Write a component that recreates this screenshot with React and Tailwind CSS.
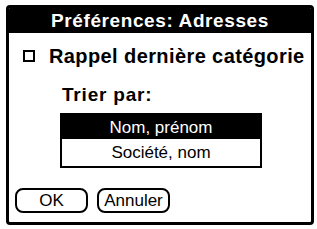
import React from 'react';

const App = () => {
  return (
    <div className="w-[317px] h-[229px] bg-white pt-[5px] pl-[6px]" style={{ fontFamily: '"Liberation Sans", Arial, sans-serif' }}>
      {/* Dialog */}
      <div className="w-[308px] h-[220px] border-[3px] border-black rounded-[4px] bg-white flex flex-col overflow-hidden">
        {/* Title bar */}
        <div className="h-[25px] bg-black text-white flex items-center justify-center font-bold text-[19px] leading-none tracking-[0.6px]">
          Préférences: Adresses
        </div>

        {/* Checkbox row */}
        <div className="flex items-center mt-[13px] ml-[14px]">
          <div className="w-[12px] h-[12px] border-[2px] border-black" />
          <span className="ml-[14px] font-bold text-[20px] leading-none text-black tracking-[0.4px]">Rappel dernière catégorie</span>
        </div>

        {/* Sort */}
        <div className="mt-[19px] ml-[53px] font-bold text-[19px] leading-none text-black tracking-[0.8px]">Trier par:</div>

        <div className="mt-[9px] ml-[51px] w-[202px] border-[2px] border-black flex flex-col">
          <div className="h-[24px] bg-black text-white flex items-center justify-center text-[17px] leading-none">Nom, prénom</div>
          <div className="h-[27px] bg-white text-black flex items-center justify-center text-[17px] leading-none">Société, nom</div>
        </div>

        {/* Buttons */}
        <div className="mt-[20px] ml-[6px] flex gap-[9px]">
          <button className="w-[73px] h-[25px] border-[2px] border-black rounded-[8px] text-[17px] leading-none text-black flex items-center justify-center">OK</button>
          <button className="w-[73px] h-[25px] border-[2px] border-black rounded-[8px] text-[17px] leading-none text-black flex items-center justify-center">Annuler</button>
        </div>
      </div>
    </div>
  );
};

export default App;
